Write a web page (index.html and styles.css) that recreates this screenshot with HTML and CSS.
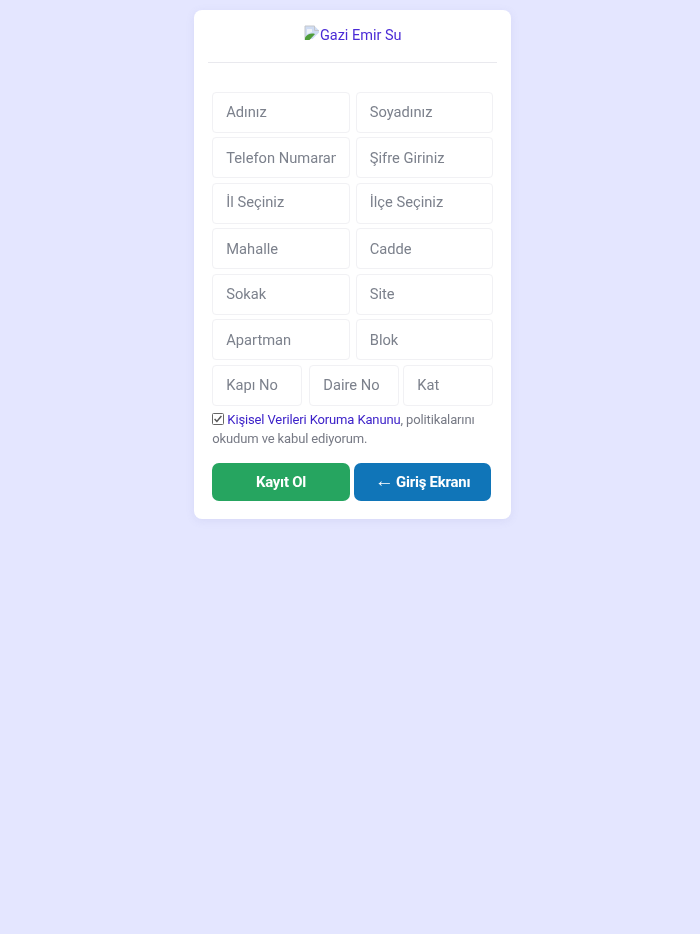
FILE: index.html
```html
<!DOCTYPE html>
<html lang="tr">
<head>
<meta charset="utf-8">
<title>Gazi Emir Su</title>
<link rel="stylesheet" href="styles.css">
</head>
<body>
<main class="card">
  <header class="logo-row">
    <a class="logo" href="#">
      <svg class="broken" width="16" height="16" viewBox="0 0 16 16" aria-hidden="true">
        <path d="M1 1H10.5L15 5.5V14H1Z" fill="#cfdcf3"/>
        <path d="M1 1H10.5V5.5H15" fill="none" stroke="#c4c7cc"/>
        <path d="M1 1V15" fill="none" stroke="#c4c7cc"/>
        <path d="M3 4H8V7L3 9Z" fill="#eef2f8"/>
        <path d="M1 15V12.5C3.5 9 7 7.8 11 9L5.5 15Z" fill="#4f9d3a"/>
        <path d="M6.5 16L16 6.5V16Z" fill="#fff"/>
      </svg>Gazi Emir Su
    </a>
  </header>
  <form class="form">
    <div class="row">
      <input class="field" placeholder="Adınız">
      <input class="field" placeholder="Soyadınız">
    </div>
    <div class="row">
      <input class="field" placeholder="Telefon Numaranız">
      <input class="field" placeholder="Şifre Giriniz">
    </div>
    <div class="row">
      <div class="field select">İl Seçiniz</div>
      <div class="field select">İlçe Seçiniz</div>
    </div>
    <div class="row">
      <input class="field" placeholder="Mahalle">
      <input class="field" placeholder="Cadde">
    </div>
    <div class="row">
      <input class="field" placeholder="Sokak">
      <input class="field" placeholder="Site">
    </div>
    <div class="row">
      <input class="field" placeholder="Apartman">
      <input class="field" placeholder="Blok">
    </div>
    <div class="row three">
      <input class="field" placeholder="Kapı No">
      <input class="field" placeholder="Daire No">
      <input class="field" placeholder="Kat">
    </div>
    <p class="consent">
      <svg class="check" width="12" height="12" viewBox="0 0 12 12" aria-hidden="true">
        <rect x="0.5" y="0.5" width="11" height="11" rx="1" fill="#fff" stroke="#666"/>
        <path d="M2.6 6L4.9 8.4L9.4 3" fill="none" stroke="#555" stroke-width="1.5"/>
      </svg>
      <a href="#">Kişisel Verileri Koruma Kanunu</a>, politikalarını okudum ve kabul ediyorum.
    </p>
    <div class="actions">
      <button class="btn green" type="button">Kayıt Ol</button>
      <button class="btn blue" type="button"><span class="arrow">←</span> Giriş Ekranı</button>
    </div>
  </form>
</main>
</body>
</html>
```

FILE: styles.css
```css
* { box-sizing: border-box; }

html, body { height: 100%; }

body {
  margin: 0;
  padding: 10px 0 0 5px;
  background: #e4e6ff;
  font-family: Roboto, "Liberation Sans", sans-serif;
  display: flex;
  justify-content: center;
  align-items: flex-start;
}

.card {
  width: 317.5px;
  height: 509px;
  background: #fff;
  border-radius: 8px;
  box-shadow: 0 2px 8px rgba(120, 120, 190, 0.12);
  padding: 0 18px 0 14.5px;
  filter: blur(0.4px);
}

.logo-row {
  height: 52.5px;
  margin-right: -4px;
  border-bottom: 1.5px solid #e9e9ee;
  text-align: center;
  padding-top: 14px;
  line-height: 22px;
}

.logo {
  display: inline-block;
  font-size: 14.5px;
  color: #4a2bd6;
  text-decoration: none;
}

.broken {
  vertical-align: -1px;
}

.form {
  padding: 29.2px 0 0 4px;
  display: flex;
  flex-direction: column;
  gap: 4.5px;
}

.row {
  display: grid;
  grid-template-columns: 138px 137.5px;
  column-gap: 5.5px;
}

.row.three {
  grid-template-columns: 93px 90px 90px;
  column-gap: 4px;
}

.row.three .field:first-child {
  width: 89.5px;
}

.field {
  width: 100%;
  min-width: 0;
  height: 41px;
  padding: 0 13px;
  border: 1.5px solid #f1f1f4;
  border-radius: 4px;
  background: #fff;
  font: 400 14.7px Roboto, sans-serif;
  color: #7c818c;
  outline: none;
}

.field::placeholder {
  color: #7c818c;
  opacity: 1;
}

.select {
  display: flex;
  align-items: center;
  padding-bottom: 2px;
}

.consent {
  margin: 0;
  font-size: 13px;
  line-height: 19px;
  letter-spacing: -0.13px;
  color: #777a85;
}

.check {
  vertical-align: -1px;
}

.consent a {
  color: #3d22c9;
  text-decoration: none;
}

.actions {
  display: flex;
  gap: 4px;
  margin-top: 10px;
  width: 279px;
}

.btn {
  flex: 1;
  height: 38px;
  border: 0;
  border-radius: 7px;
  color: #fff;
  font: 700 14.9px Roboto, sans-serif;
  letter-spacing: -0.2px;
  padding: 0;
}

.arrow {
  font-size: 19px;
  font-weight: 400;
  line-height: 0;
  margin-right: -1px;
}

.green { background: #26a560; }
.blue { background: #1075b8; }
```
